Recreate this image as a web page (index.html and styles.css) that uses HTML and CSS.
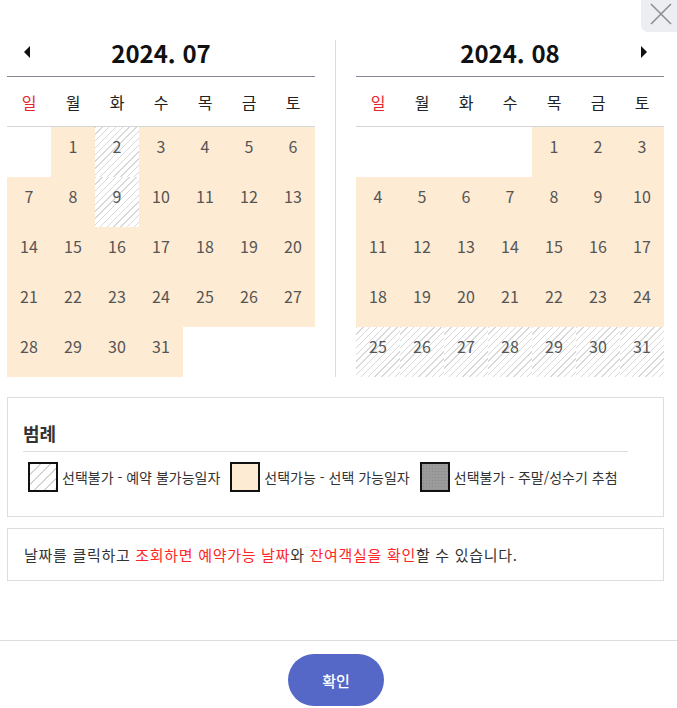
FILE: index.html
```html
<!DOCTYPE html>
<html lang="ko">
<head>
<meta charset="utf-8">
<link rel="stylesheet" href="styles.css">
</head>
<body>
<div class="popup">
  <button class="close" aria-label="닫기">
    <svg width="22" height="22" viewBox="0 0 22 22"><path d="M1 1 L21 21 M21 1 L1 21" stroke="#8d8f94" stroke-width="1.6" fill="none"/></svg>
  </button>

  <div class="calendars">
    <div class="cal">
      <div class="cal-head">
        <span class="arrow prev"></span>
        <h2 class="title">2024. 07</h2>
        <span class="slot"></span>
      </div>
      <div class="week">
        <span class="sun">일</span><span>월</span><span>화</span><span>수</span><span>목</span><span>금</span><span>토</span>
      </div>
      <div class="days">
        <span></span><span class="on">1</span><span class="off">2</span><span class="on">3</span><span class="on">4</span><span class="on">5</span><span class="on">6</span>
        <span class="on">7</span><span class="on">8</span><span class="off">9</span><span class="on">10</span><span class="on">11</span><span class="on">12</span><span class="on">13</span>
        <span class="on">14</span><span class="on">15</span><span class="on">16</span><span class="on">17</span><span class="on">18</span><span class="on">19</span><span class="on">20</span>
        <span class="on">21</span><span class="on">22</span><span class="on">23</span><span class="on">24</span><span class="on">25</span><span class="on">26</span><span class="on">27</span>
        <span class="on">28</span><span class="on">29</span><span class="on">30</span><span class="on">31</span><span></span><span></span><span></span>
      </div>
    </div>

    <div class="divider"></div>

    <div class="cal">
      <div class="cal-head">
        <span class="slot"></span>
        <h2 class="title">2024. 08</h2>
        <span class="arrow next"></span>
      </div>
      <div class="week">
        <span class="sun">일</span><span>월</span><span>화</span><span>수</span><span>목</span><span>금</span><span>토</span>
      </div>
      <div class="days">
        <span></span><span></span><span></span><span></span><span class="on">1</span><span class="on">2</span><span class="on">3</span>
        <span class="on">4</span><span class="on">5</span><span class="on">6</span><span class="on">7</span><span class="on">8</span><span class="on">9</span><span class="on">10</span>
        <span class="on">11</span><span class="on">12</span><span class="on">13</span><span class="on">14</span><span class="on">15</span><span class="on">16</span><span class="on">17</span>
        <span class="on">18</span><span class="on">19</span><span class="on">20</span><span class="on">21</span><span class="on">22</span><span class="on">23</span><span class="on">24</span>
        <span class="off">25</span><span class="off">26</span><span class="off">27</span><span class="off">28</span><span class="off">29</span><span class="off">30</span><span class="off">31</span>
      </div>
    </div>
  </div>

  <div class="legend">
    <h3 class="legend-title">범례</h3>
    <ul class="legend-list">
      <li><i class="sw sw-off"></i>선택불가 - 예약 불가능일자</li>
      <li><i class="sw sw-on"></i>선택가능 - 선택 가능일자</li>
      <li><i class="sw sw-peak"></i>선택불가 - 주말/성수기 추첨</li>
    </ul>
  </div>

  <div class="info"><p class="info-text">날짜를 클릭하고 <em>조회하면 예약가능 날짜</em>와 <em>잔여객실을 확인</em>할 수 있습니다.</p></div>

  <div class="footer">
    <button class="confirm">확인</button>
  </div>
</div>
</body>
</html>
```

FILE: styles.css
```css
* { box-sizing: border-box; }

html, body {
  margin: 0;
  padding: 0;
  background: #fff;
}

body {
  font-family: "Noto Sans CJK KR", "Noto Sans", sans-serif;
  color: #333;
}

.popup {
  position: relative;
  width: 677px;
  height: 708px;
  padding: 40px 13px 0 7px;
}

.close {
  position: absolute;
  top: 0;
  right: 0;
  width: 36px;
  height: 32px;
  border: 0;
  padding: 0;
  background: #eceef2;
  border-bottom-left-radius: 7px;
  display: flex;
  align-items: center;
  justify-content: center;
}

.close svg { display: block; margin-top: -4px; margin-left: 4px; }

.calendars {
  display: flex;
  gap: 20px;
}

.cal { width: 308px; }

.divider {
  width: 1px;
  background: #dcdcdc;
}

.cal-head {
  display: grid;
  grid-template-columns: 40px 1fr 40px;
  height: 37px;
  border-bottom: 1px solid #8a8894;
}

.title {
  margin: 0;
  text-align: center;
  font-size: 24px;
  line-height: 26px;
  font-weight: 700;
  color: #111;
}

.arrow {
  justify-self: center;
  width: 0;
  height: 0;
  margin-top: 6px;
  border-top: 6px solid transparent;
  border-bottom: 6px solid transparent;
}

.prev { border-right: 6px solid #111; }
.next { border-left: 6px solid #111; }

.week {
  display: grid;
  grid-template-columns: repeat(7, 1fr);
  height: 50px;
  border-bottom: 1px solid #d6d6d6;
  align-items: center;
  text-align: center;
  font-size: 16px;
  color: #222;
}

.week .sun { color: #e5262d; }

.days {
  display: grid;
  grid-template-columns: repeat(7, 1fr);
  grid-auto-rows: 50px;
  font-size: 16px;
  color: #555;
}

.days span {
  display: flex;
  align-items: center;
  justify-content: center;
  padding-bottom: 12px;
}

.days .on { background: #feebd4; }

.days .off {
  background: repeating-linear-gradient(135deg, #d9d9d9 0 1px, #fff 1px 4.8px);
}

.legend {
  margin-top: 20px;
  border: 1px solid #dddddd;
  padding: 23px 35px 24px 15px;
}

.legend-title {
  margin: 0;
  font-size: 18px;
  line-height: 24px;
  font-weight: 700;
  color: #333;
  padding-bottom: 6px;
  border-bottom: 1px solid #dddddd;
}

.legend-list {
  list-style: none;
  margin: 10px 0 0;
  padding: 0 0 0 5px;
  display: flex;
  gap: 10px;
  font-size: 14px;
  color: #333;
}

.legend-list li {
  display: flex;
  align-items: center;
  gap: 4px;
}

.sw {
  display: block;
  width: 30px;
  height: 30px;
  border: 2px solid #111;
}

.sw-off {
  background: repeating-linear-gradient(135deg, #d4d4d4 0 1px, #fff 1px 7px);
}

.sw-on { background: #feebd4; }

.sw-peak {
  background-color: #9b9b9b;
  background-image: radial-gradient(circle, #8a8a8a 0.8px, transparent 1px);
  background-size: 3px 3px;
}

.info {
  margin-top: 11px;
  border: 1px solid #dddddd;
  height: 53px;
  padding: 0 16px;
}

.info-text {
  margin: 0;
  font-size: 15px;
  letter-spacing: 0.7px;
  line-height: 51px;
  color: #333;
  white-space: nowrap;
}

.info em {
  font-style: normal;
  color: #ff2626;
}

.footer {
  margin: 59px -13px 0 -7px;
  border-top: 1px solid #dddddd;
  padding: 13px 5px 0 0;
  display: flex;
  justify-content: center;
}

.confirm {
  width: 96px;
  height: 52px;
  border: 0;
  border-radius: 26px;
  background: #5568c8;
  color: #fff;
  font-family: "Noto Sans CJK KR", "Noto Sans", sans-serif;
  font-size: 15px;
  font-weight: 500;
}
```
